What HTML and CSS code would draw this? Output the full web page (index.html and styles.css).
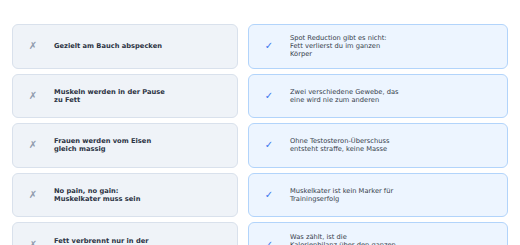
FILE: index.html
```html
<!DOCTYPE html>
<html lang="de">
<head>
<meta charset="utf-8">
<link rel="stylesheet" href="styles.css">
</head>
<body>
<div class="grid">
  <div class="card myth"><span class="icon">✗</span><p class="text">Gezielt am Bauch abspecken</p></div>
  <div class="card fact"><span class="icon">✓</span><p class="text">Spot Reduction gibt es nicht:<br>Fett verlierst du im ganzen<br>Körper</p></div>

  <div class="card myth"><span class="icon">✗</span><p class="text">Muskeln werden in der Pause<br>zu Fett</p></div>
  <div class="card fact"><span class="icon">✓</span><p class="text">Zwei verschiedene Gewebe, das<br>eine wird nie zum anderen</p></div>

  <div class="card myth"><span class="icon">✗</span><p class="text">Frauen werden vom Eisen<br>gleich massig</p></div>
  <div class="card fact"><span class="icon">✓</span><p class="text">Ohne Testosteron-Überschuss<br>entsteht straffe, keine Masse</p></div>

  <div class="card myth"><span class="icon">✗</span><p class="text">No pain, no gain:<br>Muskelkater muss sein</p></div>
  <div class="card fact"><span class="icon">✓</span><p class="text">Muskelkater ist kein Marker für<br>Trainingserfolg</p></div>

  <div class="card myth"><span class="icon">✗</span><p class="text">Fett verbrennt nur in der<br>Fettverbrennungszone</p></div>
  <div class="card fact"><span class="icon">✓</span><p class="text">Was zählt, ist die<br>Kalorienbilanz über den ganzen<br>Tag</p></div>
</div>
</body>
</html>
```
FILE: styles.css
```css
html, body {
  margin: 0;
  padding: 0;
  background: #ffffff;
}
body {
  padding: 24px 12px 0 12px;
  font-family: "DejaVu Sans", "Liberation Sans", sans-serif;
}
.grid {
  display: grid;
  grid-template-columns: 226fr 260fr;
  grid-auto-rows: 44.6px;
  column-gap: 10px;
  row-gap: 5px;
}
.card {
  box-sizing: border-box;
  display: flex;
  align-items: center;
  gap: 16px;
  padding: 0 15px;
  border-radius: 6px;
  border: 1.5px solid #d9e1ec;
  background: #eff3f8;
}
.fact {
  background: #edf5ff;
  border-color: #b2d4fb;
}
.icon {
  width: 10px;
  flex: none;
  text-align: center;
  font-size: 10px;
  line-height: 10px;
}
.myth .icon {
  color: #8f9bad;
}
.fact .icon {
  color: #3b78ee;
  font-weight: 700;
}
.text {
  margin: 0;
  font-size: 6.7px;
  line-height: 8px;
  white-space: nowrap;
}
.myth .text {
  font-weight: 700;
  color: #2c3444;
}
.fact .text {
  color: #363d4b;
}
```
